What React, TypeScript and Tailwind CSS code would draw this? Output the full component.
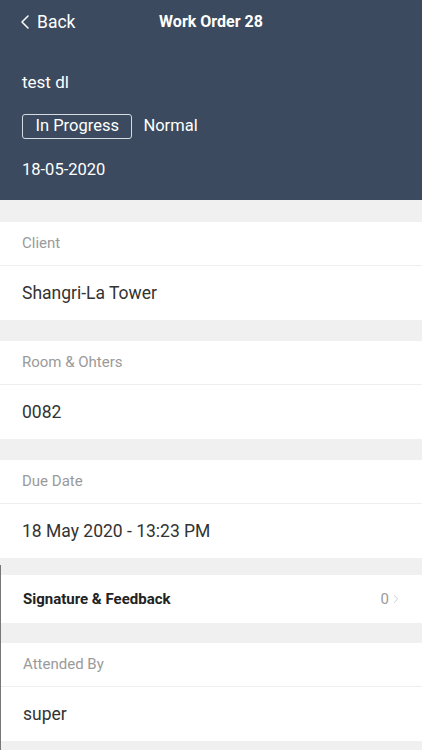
import { ChevronLeft, ChevronRight } from "lucide-react";

const Field = ({ label, value }: { label: string; value: string }) => (
  <div className="bg-white">
    <div className="h-[44px] flex items-center px-[22px] text-[15px] text-[#9a9a9a] border-b border-[#eeeeee]">
      {label}
    </div>
    <div className="h-[54px] flex items-center px-[22px] text-[17.5px] text-[#333]">{value}</div>
  </div>
);

const App = () => {
  return (
    <div className="w-[422px] h-[750px] overflow-hidden bg-[#f0f0f0]" style={{ fontFamily: "Roboto, 'Liberation Sans', sans-serif" }}>
      <div className="bg-[#3b4a5e] h-[200px] text-white px-[22px]">
        <div className="relative h-[44px] flex items-center">
          <div className="flex items-center -ml-[9px] text-[17.5px]">
            <ChevronLeft size={24} strokeWidth={1.5} />
            <span>Back</span>
          </div>
          <div className="absolute left-0 right-0 text-center text-[16px] font-bold pointer-events-none">
            Work Order 28
          </div>
        </div>
        <div className="mt-[26px] text-[17px] leading-[24px]">test dl</div>
        <div className="mt-[20px] flex items-center gap-[11px]">
          <span className="border border-[#d5dbe2] rounded-[3px] px-[12.5px] h-[25px] flex items-center text-[16.5px]">In Progress</span>
          <span className="text-[16.5px]">Normal</span>
        </div>
        <div className="mt-[19px] text-[16.5px]">18-05-2020</div>
      </div>
      <div className="h-[22px]" />
      <Field label="Client" value="Shangri-La Tower" />
      <div className="h-[21px]" />
      <Field label="Room & Ohters" value="0082" />
      <div className="h-[21px]" />
      <Field label="Due Date" value="18 May 2020 - 13:23 PM" />
      <div className="h-[7px]" />
      <div className="border-l border-[#777]">
        <div className="h-[10px]" />
        <div className="bg-white h-[48px] flex items-center justify-between pl-[22px] pr-[19px]">
          <span className="text-[15px] font-bold text-[#222]">Signature & Feedback</span>
          <span className="flex items-center text-[15px] text-[#999]">
            0<ChevronRight size={14} strokeWidth={1.3} className="text-[#bbb]" />
          </span>
        </div>
        <div className="h-[20px]" />
        <Field label="Attended By" value="super" />
        <div className="h-[20px]" />
      </div>
    </div>
  );
};

export default App;
